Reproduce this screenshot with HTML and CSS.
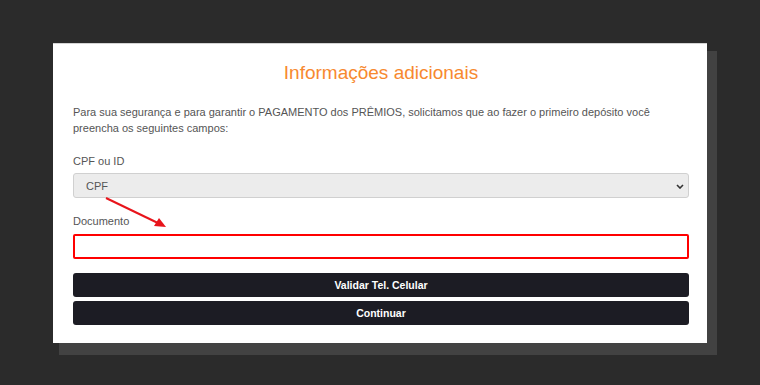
FILE: index.html
```html
<!DOCTYPE html>
<html lang="pt-BR">
<head>
<meta charset="utf-8">
<title>Informações adicionais</title>
<link rel="stylesheet" href="styles.css">
</head>
<body>
<div class="modal">
    <h2 class="title">Informações adicionais</h2>
    <p class="intro">Para sua segurança e para garantir o PAGAMENTO dos PRÊMIOS, solicitamos que ao fazer o primeiro depósito você preencha os seguintes campos:</p>

    <label class="lbl" for="tipo">CPF ou ID</label>
    <div class="select-wrap">
        <select id="tipo" class="select">
            <option>CPF</option>
            <option>ID</option>
        </select>
        <svg class="chev" width="8" height="5" viewBox="0 0 8 5"><path d="M1 1 L4 4 L7 1" fill="none" stroke="#333" stroke-width="1.6"/></svg>
    </div>

    <label class="lbl lbl-doc" for="doc">Documento</label>
    <input id="doc" class="input input-err" type="text">

    <button class="btn btn-first">Validar Tel. Celular</button>
    <button class="btn">Continuar</button>

    <svg class="arrow" width="80" height="40" viewBox="0 0 80 40">
        <line x1="2" y1="2" x2="56" y2="28" stroke="#e8141b" stroke-width="2"/>
        <path d="M62 31 L50 30 L55 22 Z" fill="#e8141b"/>
    </svg>
</div>
</body>
</html>
```

FILE: styles.css
```css
*{ margin:0; padding:0; box-sizing:border-box;}
html,body{ min-height:100%;}
body{ background:#2b2b2b; font-family:"Liberation Sans", Arial, sans-serif; color:#555; padding-bottom:30px;}
.modal{ position:relative; width:654px; margin:43px 0 0 53px; padding:17px 18px 18px 20px; background:#fff; border-top:1px solid #d4d4d4; box-shadow:8px 10px 0 2px #424242;}
.title{ font-size:19px; line-height:24px; font-weight:normal; color:#f7892f; text-align:center;}
.intro{ margin-top:19px; font-size:11px; line-height:16px; color:#555;}
.lbl{ display:block; margin-top:17px; font-size:11px; line-height:16px; color:#555;}
.lbl-doc{ margin-top:15px;}
.select-wrap{ position:relative; margin-top:4px;}
.select{ display:block; width:616px; height:25px; padding:0 12px; border:1px solid #d0d0d0; border-radius:3px; background:#ececec; font-family:inherit; font-size:11px; color:#555; appearance:none; -webkit-appearance:none; outline:none;}
.chev{ position:absolute; right:5px; top:11px;}
.input{ display:block; width:616px; height:25px; margin-top:5px; padding:0 8px; border:1px solid #ccc; border-radius:2px; font-family:inherit; font-size:11px; outline:none;}
.input-err{ border:2px solid #f00;}
.btn{ display:block; width:616px; height:24px; margin-top:4px; border:0; border-radius:3px; background:#1c1c24; color:#fff; font-family:inherit; font-size:10.5px; font-weight:bold; cursor:pointer;}
.btn-first{ margin-top:14px;}
.arrow{ position:absolute; left:51px; top:152px;}
```
